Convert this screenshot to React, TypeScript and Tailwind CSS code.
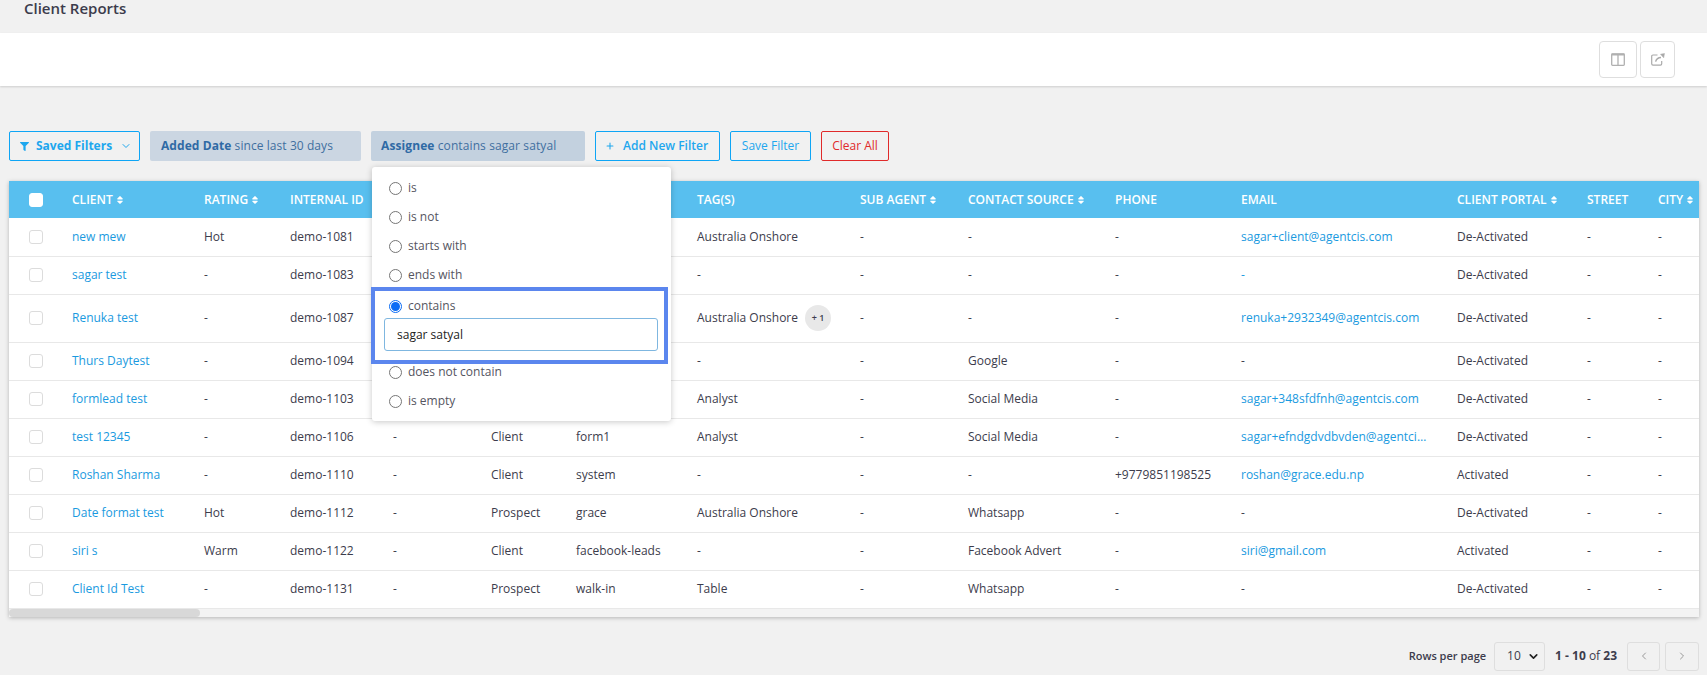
import React from "react";
import { ChevronDown, ChevronLeft, ChevronRight, Plus } from "lucide-react";
import { FaFilter, FaSort } from "react-icons/fa";

type Row = { name: string; rating: string; id: string; assignee: string; type: string; source: string; tag: string; extra?: boolean; contact: string; phone: string; email: string; portal: string; tall?: boolean };

const rows: Row[] = [
  { name: "new mew", rating: "Hot", id: "demo-1081", assignee: "-", type: "Client", source: "system", tag: "Australia Onshore", contact: "-", phone: "-", email: "sagar+client@agentcis.com", portal: "De-Activated" },
  { name: "sagar test", rating: "-", id: "demo-1083", assignee: "-", type: "Client", source: "system", tag: "-", contact: "-", phone: "-", email: "-", portal: "De-Activated" },
  { name: "Renuka test", rating: "-", id: "demo-1087", assignee: "-", type: "Client", source: "system", tag: "Australia Onshore", extra: true, contact: "-", phone: "-", email: "renuka+2932349@agentcis.com", portal: "De-Activated", tall: true },
  { name: "Thurs Daytest", rating: "-", id: "demo-1094", assignee: "-", type: "Client", source: "system", tag: "-", contact: "Google", phone: "-", email: "-", portal: "De-Activated" },
  { name: "formlead test", rating: "-", id: "demo-1103", assignee: "-", type: "Client", source: "form1", tag: "Analyst", contact: "Social Media", phone: "-", email: "sagar+348sfdfnh@agentcis.com", portal: "De-Activated" },
  { name: "test 12345", rating: "-", id: "demo-1106", assignee: "-", type: "Client", source: "form1", tag: "Analyst", contact: "Social Media", phone: "-", email: "sagar+efndgdvdbvden@agentcis.com", portal: "De-Activated" },
  { name: "Roshan Sharma", rating: "-", id: "demo-1110", assignee: "-", type: "Client", source: "system", tag: "-", contact: "-", phone: "+9779851198525", email: "roshan@grace.edu.np", portal: "Activated" },
  { name: "Date format test", rating: "Hot", id: "demo-1112", assignee: "-", type: "Prospect", source: "grace", tag: "Australia Onshore", contact: "Whatsapp", phone: "-", email: "-", portal: "De-Activated" },
  { name: "siri s", rating: "Warm", id: "demo-1122", assignee: "-", type: "Client", source: "facebook-leads", tag: "-", contact: "Facebook Advert", phone: "-", email: "siri@gmail.com", portal: "Activated" },
  { name: "Client Id Test", rating: "-", id: "demo-1131", assignee: "-", type: "Prospect", source: "walk-in", tag: "Table", contact: "Whatsapp", phone: "-", email: "-", portal: "De-Activated" },
];

const headers: [string, boolean][] = [
  ["CLIENT", true], ["RATING", true], ["INTERNAL ID", false], ["ASSIGNEE", false], ["TYPE", false], ["SOURCE", false], ["TAG(S)", false],
  ["SUB AGENT", true], ["CONTACT SOURCE", true], ["PHONE", false], ["EMAIL", false], ["CLIENT PORTAL", true], ["STREET", false], ["CITY", true],
];

const widths = ["w-[63px]", "w-[132px]", "w-[86px]", "w-[103px]", "w-[98px]", "w-[85px]", "w-[121px]", "w-[163px]", "w-[108px]", "w-[147px]", "w-[126px]", "w-[216px]", "w-[130px]", "w-[71px]", "w-[100px]"];

const options = ["is", "is not", "starts with", "ends with"];

function Radio({ checked, label, indent }: { checked?: boolean; label: string; indent?: boolean }) {
  return (
    <div className={`flex items-center gap-[6px] ${indent ? "pl-[14px]" : "pl-[17px]"} text-[12px] text-[#55555f]`}>
      {checked ? (
        <span className="flex h-[13px] w-[13px] items-center justify-center rounded-full border border-[#0a6cf5]">
          <span className="h-[9px] w-[9px] rounded-full bg-[#0a6cf5]" />
        </span>
      ) : (
        <span className="h-[13px] w-[13px] rounded-full border border-[#767676] bg-white" />
      )}
      <span>{label}</span>
    </div>
  );
}

function Box({ header }: { header?: boolean }) {
  return <span className={`block h-[14px] w-[14px] rounded-[3px] border ${header ? "border-white bg-white" : "border-[#dcdcdc] bg-white"}`} />;
}

export default function App() {
  return (
    <div className="min-h-[675px] bg-[#f1f1f1] font-['Open_Sans',sans-serif] text-[12px] text-[#3c3c4c]">
      <div className="flex h-[33px] items-start pl-[24px]">
        <h1 className="text-[15px] font-semibold leading-[16px] text-[#3c3c4c]">Client Reports</h1>
      </div>

      <div className="flex h-[53px] items-start justify-end gap-[3px] bg-white pr-[32px] pt-[8px] shadow-[0_1px_2px_rgba(0,0,0,0.15)]">
        <button className="flex h-[37px] w-[38px] items-center justify-center rounded-[4px] border border-[#dedede]">
          <svg width="14" height="13" viewBox="0 0 14 13" fill="none" stroke="#b0b0b0" strokeWidth="1.3">
            <rect x="0.7" y="0.9" width="12.6" height="11.4" rx="0.8" />
            <path d="M0.7 1.5H13.3" strokeWidth="2" />
            <path d="M7 1V12.3" />
          </svg>
        </button>
        <button className="flex h-[37px] w-[35px] items-center justify-center rounded-[4px] border border-[#dedede]">
          <svg width="14" height="13" viewBox="0 0 14 13" fill="none" stroke="#aaaaaa" strokeWidth="1.2">
            <path d="M6.5 2H2C1.2 2 .7 2.5.7 3.3V10.8C.7 11.6 1.2 12.1 2 12.1H9.4C10.2 12.1 10.7 11.6 10.7 10.8V8" />
            <path d="M4.6 8.6C5.4 5.6 7.4 4.4 10 4.4" strokeWidth="1.5" />
            <path d="M9.5 1.2L13.5 .5L12.7 4.8Z" fill="#aaaaaa" stroke="#aaaaaa" strokeWidth="0.5" />
          </svg>
        </button>
      </div>

      <div className="relative">
        <div className="ml-[9px] mt-[45px] flex h-[30px] items-stretch gap-[10px]">
          <button className="flex w-[131px] items-center rounded-[2px] border border-[#0ea5f5] pl-[10px] text-[12px] font-bold text-[#1ea7ee]">
            <FaFilter size={9} className="mr-[7px]" />
            <span>Saved Filters</span>
            <ChevronDown size={12} className="ml-[8px]" />
          </button>
          <div className="flex w-[211px] items-center rounded-[2px] bg-[#cbd6e2] pl-[11px] text-[#3f6f9f]">
            <span className="tracking-[0.07px]"><b className="font-bold text-[#2f6aa5]">Added Date</b> since last 30 days</span>
          </div>
          <div className="flex w-[214px] items-center rounded-[2px] bg-[#c3d1df] pl-[10px] text-[#3f6f9f]">
            <span className="tracking-[0.1px]"><b className="font-bold text-[#2f6aa5]">Assignee</b> contains sagar satyal</span>
          </div>
          <button className="flex w-[125px] items-center rounded-[2px] border border-[#0ea5f5] pl-[9px] font-semibold text-[#1ea7ee]">
            <Plus size={10} strokeWidth={2.5} className="mr-[8px]" />
            <span>Add New Filter</span>
          </button>
          <button className="w-[81px] rounded-[2px] border border-[#0ea5f5] font-normal text-[#1ea7ee]">Save Filter</button>
          <button className="w-[68px] rounded-[2px] border border-[#e02a2a] text-[#e02a2a]">Clear All</button>
        </div>

        <div className="ml-[9px] mr-[8px] mt-[20px] overflow-hidden bg-white shadow-[0_1px_4px_rgba(0,0,0,0.25)]">
          <table className="w-[1749px] table-fixed border-collapse">
            <colgroup>
              {widths.map((w) => <col key={w} className={w} />)}
            </colgroup>
            <thead>
              <tr className="h-[37px] bg-[#58bfef] text-left text-white">
                <th className="pl-[20px] font-normal"><Box header /></th>
                {headers.map(([h, sort]) => (
                  <th key={h} className="whitespace-nowrap p-0 text-[12px] font-semibold">
                    <span className="inline-flex items-center gap-[2px]">
                      {h}
                      {sort && <FaSort size={10} />}
                    </span>
                  </th>
                ))}
                <th />
              </tr>
            </thead>
            <tbody>
              {rows.map((r) => (
                <tr key={r.name} className={`${r.tall ? "h-[48px]" : "h-[38px]"} border-b border-[#e8e8e8]`}>
                  <td className="pl-[20px]"><Box /></td>
                  <td className="p-0 text-[#1a9ae0]">{r.name}</td>
                  <td className="p-0">{r.rating}</td>
                  <td className="p-0">{r.id}</td>
                  <td className="p-0">{r.assignee}</td>
                  <td className="p-0">{r.type}</td>
                  <td className="p-0">{r.source}</td>
                  <td className="p-0">
                    <span className="inline-flex items-center">
                      {r.tag}
                      {r.extra && (
                        <span className="ml-[7px] flex h-[26px] w-[26px] items-center justify-center rounded-full bg-[#e8e8e8] text-[9px] font-semibold">+ 1</span>
                      )}
                    </span>
                  </td>
                  <td className="p-0">-</td>
                  <td className="p-0">{r.contact}</td>
                  <td className="p-0">{r.phone}</td>
                  <td className="p-0 pr-[30px]">
                    <span className={`block truncate ${r.email === "-" && r.name !== "sagar test" ? "" : "text-[#1a9ae0]"}`}>{r.email}</span>
                  </td>
                  <td className="p-0">{r.portal}</td>
                  <td className="p-0">-</td>
                  <td className="p-0">-</td>
                </tr>
              ))}
            </tbody>
          </table>
          <div className="h-[8px] bg-[#f3f3f3]">
            <div className="h-full w-[191px] rounded-full bg-[#d8d8d8]" />
          </div>
        </div>

        <div className="absolute left-[372px] top-[36px] z-10 h-[254px] w-[299px] rounded-[3px] bg-white shadow-[0_1px_6px_rgba(0,0,0,0.22)]">
          <div className="flex flex-col gap-[11px] pt-[12px] leading-[18px]">
            {options.map((o) => <Radio key={o} label={o} />)}
          </div>
          <div className="absolute left-[-1px] top-[120px] h-[77px] w-[297px] border-[4px] border-[#5b86ee]">
            <div className="pt-[6px] leading-[18px]"><Radio checked indent label="contains" /></div>
            <input readOnly value="sagar satyal" className="absolute left-[9px] top-[27px] h-[33px] w-[274px] rounded-[3px] border border-[#7fb7e0] pl-[12px] text-[12px] text-[#222] outline-none" />
          </div>
          <div className="absolute left-0 top-[196px] flex w-full flex-col gap-[11px] leading-[18px]">
            <Radio label="does not contain" />
            <Radio label="is empty" />
          </div>
        </div>

        <div className="mr-[8px] mt-[25px] flex h-[29px] items-stretch justify-end">
          <span className="mr-[8px] self-center text-[11px] font-semibold text-[#3c3c4c]">Rows per page</span>
          <div className="mr-[10px] flex w-[51px] items-center justify-between rounded-[3px] border border-[#dedede] pl-[12px] pr-[4px]">
            <span>10</span>
            <ChevronDown size={13} strokeWidth={3} className="text-[#222]" />
          </div>
          <span className="mr-[10px] self-center text-[#3c3c4c]"><b className="font-bold">1 - 10</b> of <b className="font-bold">23</b></span>
          <button className="mr-[5px] flex w-[33px] items-center justify-center rounded-[3px] border border-[#dedede] text-[#999]"><ChevronLeft size={12} /></button>
          <button className="flex w-[34px] items-center justify-center rounded-[3px] border border-[#dedede] text-[#999]"><ChevronRight size={12} /></button>
        </div>
      </div>
    </div>
  );
}
